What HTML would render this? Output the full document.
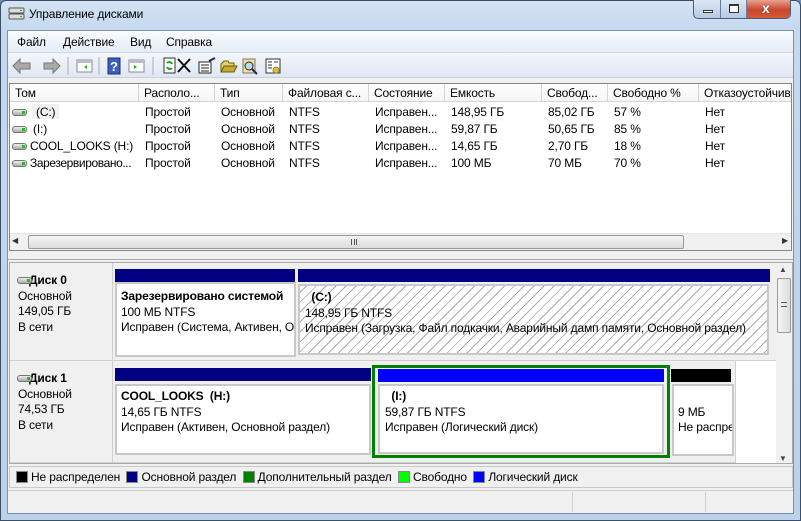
<!DOCTYPE html>
<html><head><meta charset="utf-8"><style>
*{box-sizing:border-box;margin:0;padding:0}
body{width:801px;height:521px;overflow:hidden;font-family:"Liberation Sans","DejaVu Sans",sans-serif;font-size:12px;color:#000;background:#6b8fb8;position:relative;letter-spacing:-0.15px}
.a{position:absolute}
.win{left:0;top:0;width:801px;height:521px;background:linear-gradient(#d4e3f4,#c5d8ee 30px,#bcd1ea);border:1px solid #3a4e66;border-radius:6px 6px 0 0}
.client{left:7px;top:30px;width:787px;height:484px;background:#f0f0f0;border:1px solid #7d93ab}
.hdr{top:84px;height:18px;background:#fff;border-bottom:1px solid #d5d5d5}
.hc{position:absolute;top:0;height:17px;border-right:1px solid #d5d5d5;padding:2px 0 0 5px;white-space:nowrap;overflow:hidden;background:linear-gradient(#fff,#f5f5f5)}
.row{position:absolute;left:0;height:17px;width:780px}
.row span{position:absolute;top:2px;white-space:nowrap}
.hd{display:inline-block;width:15px;height:7px;border:1px solid #777;border-radius:3px;background:linear-gradient(#eee,#aaa);position:relative;vertical-align:middle}
.hd:after{content:"";position:absolute;right:1px;top:1px;width:3px;height:3px;background:#2b2}
.lbl{background:#f0f0f0;border-right:1px solid #d0d0d0;border-bottom:1px solid #d0d0d0;padding:4px 0 0 8px;line-height:15.5px}
.bar{height:13px}
.box{background:#fff;border:2px solid #c8c8c8;padding:5px 0 0 4px;line-height:15.5px;white-space:nowrap;overflow:hidden}
.hatch{background:repeating-linear-gradient(135deg,#fff 0 4px,#aaa 4px 5px,#fff 5px 7px)}
.lg{display:inline-block;width:12px;height:12px;border:1px solid #888;vertical-align:-2px;margin-right:3px}
</style></head><body>
<div class="a win"></div>
<svg class="a" style="left:8px;top:6px" width="18" height="16"><rect x="1" y="2" width="15" height="5" rx="1" fill="#ddd" stroke="#555"/><rect x="1" y="8" width="15" height="5" rx="1" fill="#ddd" stroke="#555"/><rect x="12" y="4" width="2" height="1" fill="#2a2"/><rect x="12" y="10" width="2" height="1" fill="#2a2"/></svg>
<div class="a" style="left:29px;top:7px;font-size:12px">Управление дисками</div>
<div class="a" style="left:693px;top:0;width:98px;height:19px;border:1px solid #4a5e78;border-top:none;border-radius:0 0 5px 5px;background:linear-gradient(#dde8f5,#b5c9e2);overflow:hidden">
 <div class="a" style="left:0;top:0;width:27px;height:18px;border-right:1px solid #6a7e98"></div>
 <div class="a" style="left:9px;top:10px;width:10px;height:3px;border:1px solid #333;background:#fff"></div>
 <div class="a" style="left:27px;top:0;width:26px;height:18px;border-right:1px solid #6a7e98"></div>
 <div class="a" style="left:35px;top:4px;width:10px;height:9px;border:1px solid #333;border-top-width:2px;background:#fff"></div>
 <div class="a" style="left:53px;top:0;width:45px;height:18px;background:linear-gradient(#e8a290,#c9462c 55%,#d45a3a)"></div>
 <div class="a" style="left:68px;top:0px;color:#fff;font-weight:bold;font-size:14px;text-shadow:0 0 1px #333">x</div>
</div>
<div class="a client"></div>
<div class="a" style="left:8px;top:31px;width:785px;height:22px;background:linear-gradient(#fafcff,#e4ecf7);border-bottom:1px solid #d0d8e4"></div>
<div class="a" style="left:17px;top:35px">Файл</div>
<div class="a" style="left:63px;top:35px">Действие</div>
<div class="a" style="left:130px;top:35px">Вид</div>
<div class="a" style="left:166px;top:35px">Справка</div>
<div class="a" style="left:8px;top:53px;width:785px;height:25px;background:linear-gradient(#f3f6fb,#dfe7f2);border-bottom:1px solid #c8d0dc"></div>
<svg class="a" style="left:10px;top:56px" width="300" height="20">
 <path d="M3 10 L10 3 L10 7 L20 7 L20 13 L10 13 L10 17 Z" fill="#aaa" stroke="#777"/>
 <path d="M50 10 L43 3 L43 7 L34 7 L34 13 L43 13 L43 17 Z" fill="#aaa" stroke="#777"/>
 <line x1="58" y1="1" x2="58" y2="19" stroke="#aab"/>
 <rect x="67" y="4" width="15" height="12" fill="#fff" stroke="#888"/><rect x="67" y="4" width="15" height="3" fill="#bbc"/><path d="M77 9 L74 11 L77 13Z" fill="#2a2"/>
 <line x1="89" y1="1" x2="89" y2="19" stroke="#aab"/>
 <rect x="98" y="2" width="12" height="16" fill="#3a5fc8" stroke="#234"/><text x="100" y="15" fill="#fff" font-size="13" font-weight="bold" font-family="Liberation Sans">?</text>
 <rect x="119" y="4" width="15" height="12" fill="#fff" stroke="#888"/><rect x="119" y="4" width="15" height="3" fill="#bbc"/><path d="M124 9 L127 11 L124 13Z" fill="#2a2"/>
 <line x1="143" y1="1" x2="143" y2="19" stroke="#aab"/>
 <rect x="154" y="2" width="11" height="15" fill="#fff" stroke="#333"/><path d="M157 7 A3 3 0 0 1 162 8 M162 12 A3 3 0 0 1 157 11" stroke="#1a1" stroke-width="2" fill="none"/>
 <path d="M168 3 L180 16 M180 3 L168 16" stroke="#111" stroke-width="2"/>
 <rect x="189" y="6" width="12" height="11" fill="#fff" stroke="#222"/><path d="M191 9h8M191 12h8M191 15h8" stroke="#222"/><path d="M199 5 L205 2" stroke="#225" stroke-width="2"/>
 <path d="M211 8 L214 5 L218 5 L219 7 L224 7 L224 16 L211 16 Z" fill="#e8d070" stroke="#6a5a10"/><path d="M211 16 L214 10 L227 10 L224 16Z" fill="#c8a830" stroke="#6a5a10"/>
 <rect x="233" y="3" width="12" height="14" fill="#f4e090" stroke="#777"/><circle cx="239" cy="10" r="4" fill="#bde" stroke="#225"/><path d="M242 13 L247 18" stroke="#225" stroke-width="2"/>
 <rect x="256" y="3" width="14" height="14" fill="#fff" stroke="#333"/><path d="M258 6h4M258 9h4M264 6h4M258 12h4" stroke="#333"/><circle cx="266" cy="14" r="3" fill="#e8c020" stroke="#885"/>
</svg>
<div class="a" style="left:9px;top:83px;width:783px;height:168px;background:#fff;border:1px solid #82878f"></div>
<div class="a hdr" style="left:10px;width:781px">
 <div class="hc" style="left:0;width:129px">Том</div>
 <div class="hc" style="left:129px;width:76px">Располо...</div>
 <div class="hc" style="left:205px;width:68px">Тип</div>
 <div class="hc" style="left:273px;width:86px">Файловая с...</div>
 <div class="hc" style="left:359px;width:76px">Состояние</div>
 <div class="hc" style="left:435px;width:97px">Емкость</div>
 <div class="hc" style="left:532px;width:66px">Свобод...</div>
 <div class="hc" style="left:598px;width:91px">Свободно %</div>
 <div class="hc" style="left:689px;width:92px;border-right:none">Отказоустойчив</div>
</div>
<div class="a" style="left:10px;top:103px;width:781px;height:130px">
 <div class="row" style="top:0"><span style="left:2px"><i class="hd"></i></span><span style="left:22px;background:#f0f0f0;padding:0 4px;top:1px;height:15px;padding-top:1px">(C:)</span><span style="left:135px">Простой</span><span style="left:211px">Основной</span><span style="left:279px">NTFS</span><span style="left:365px">Исправен...</span><span style="left:441px">148,95 ГБ</span><span style="left:538px">85,02 ГБ</span><span style="left:604px">57 %</span><span style="left:695px">Нет</span></div>
 <div class="row" style="top:17px"><span style="left:2px"><i class="hd"></i></span><span style="left:23px">(I:)</span><span style="left:135px">Простой</span><span style="left:211px">Основной</span><span style="left:279px">NTFS</span><span style="left:365px">Исправен...</span><span style="left:441px">59,87 ГБ</span><span style="left:538px">50,65 ГБ</span><span style="left:604px">85 %</span><span style="left:695px">Нет</span></div>
 <div class="row" style="top:34px"><span style="left:2px"><i class="hd"></i></span><span style="left:20px">COOL_LOOKS (H:)</span><span style="left:135px">Простой</span><span style="left:211px">Основной</span><span style="left:279px">NTFS</span><span style="left:365px">Исправен...</span><span style="left:441px">14,65 ГБ</span><span style="left:538px">2,70 ГБ</span><span style="left:604px">18 %</span><span style="left:695px">Нет</span></div>
 <div class="row" style="top:51px"><span style="left:2px"><i class="hd"></i></span><span style="left:20px;letter-spacing:-0.4px">Зарезервировано...</span><span style="left:135px">Простой</span><span style="left:211px">Основной</span><span style="left:279px">NTFS</span><span style="left:365px">Исправен...</span><span style="left:441px">100 МБ</span><span style="left:538px">70 МБ</span><span style="left:604px">70 %</span><span style="left:695px">Нет</span></div>
</div>
<div class="a" style="left:10px;top:233px;width:781px;height:17px;background:#f0f0f0;border-top:1px solid #e4e4e4"></div>
<div class="a" style="left:12px;top:236px;font-size:8px;color:#333">◀</div>
<div class="a" style="left:782px;top:236px;font-size:8px;color:#333">▶</div>
<div class="a" style="left:28px;top:235px;width:656px;height:14px;border:1px solid #9a9a9a;border-radius:2px;background:linear-gradient(#f4f4f4,#dcdcdc)"></div>
<div class="a" style="left:351px;top:239px;width:6px;height:6px;border-left:1px solid #555;border-right:1px solid #555"></div><div class="a" style="left:354px;top:239px;width:1px;height:6px;background:#555"></div>
<div class="a" style="left:8px;top:251px;width:785px;height:9px;background:#f0f0f0;border-bottom:1px solid #aaa"></div>
<div class="a" style="left:9px;top:262px;width:784px;height:202px;background:#fff;border:1px solid #aaa"></div>
<div class="a lbl" style="left:10px;top:263px;width:103px;height:98px"><div style="font-weight:bold;margin-left:11px;margin-top:6px;position:relative"><i class="hd" style="position:absolute;left:-12px;top:4px"></i>Диск 0</div>Основной<br>149,05 ГБ<br>В сети</div>
<div class="a" style="left:113px;top:263px;width:663px;height:98px;background:#f0f0f0;border-bottom:1px solid #d0d0d0"></div>
<div class="a bar" style="left:115px;top:269px;width:180px;background:#000080"></div>
<div class="a box" style="left:115px;top:282px;width:181px;height:75px"><b>Зарезервировано системой</b><br>100 МБ NTFS<br>Исправен (Система, Активен, Осн</div>
<div class="a bar" style="left:298px;top:269px;width:472px;background:#000080"></div>
<div class="a box hatch" style="left:298px;top:284px;width:471px;height:71px;padding-left:5px;padding-top:4px">&nbsp;&nbsp;<b>(C:)</b><br>148,95 ГБ NTFS<br>Исправен (Загрузка, Файл подкачки, Аварийный дамп памяти, Основной раздел)</div>
<div class="a lbl" style="left:10px;top:361px;width:103px;height:102px"><div style="font-weight:bold;margin-left:11px;margin-top:6px;position:relative"><i class="hd" style="position:absolute;left:-12px;top:4px"></i>Диск 1</div>Основной<br>74,53 ГБ<br>В сети</div>
<div class="a" style="left:113px;top:361px;width:623px;height:102px;background:#f0f0f0;border-bottom:1px solid #d0d0d0;border-right:1px solid #d0d0d0"></div>
<div class="a bar" style="left:115px;top:368px;width:256px;background:#000080"></div>
<div class="a box" style="left:115px;top:384px;width:256px;height:71px;padding-top:3px"><b>COOL_LOOKS&nbsp; (H:)</b><br>14,65 ГБ NTFS<br>Исправен (Активен, Основной раздел)</div>
<div class="a" style="left:372px;top:365px;width:298px;height:93px;border:3px solid #008000;background:#f0f0f0"></div>
<div class="a bar" style="left:378px;top:369px;width:286px;background:#0000ff"></div>
<div class="a box" style="left:378px;top:384px;width:286px;height:70px;padding-top:3px;padding-left:5px">&nbsp;&nbsp;<b>(I:)</b><br>59,87 ГБ NTFS<br>Исправен (Логический диск)</div>
<div class="a bar" style="left:671px;top:369px;width:60px;background:#000"></div>
<div class="a box" style="left:672px;top:384px;width:62px;height:72px;padding-top:3px;padding-left:4px"><br>9 МБ<br>Не распределен</div>
<div class="a" style="left:776px;top:263px;width:16px;height:200px;background:#f0f0f0"></div>
<div class="a" style="left:779px;top:265px;font-size:8px;color:#444">▲</div>
<div class="a" style="left:779px;top:454px;font-size:8px;color:#444">▼</div>
<div class="a" style="left:777px;top:278px;width:14px;height:55px;border:1px solid #9a9a9a;border-radius:2px;background:linear-gradient(90deg,#f4f4f4,#dcdcdc)"></div>
<div class="a" style="left:781px;top:302px;width:6px;height:5px;border-top:1px solid #555;border-bottom:1px solid #555"></div>
<div class="a" style="left:9px;top:466px;width:784px;height:22px;border:1px solid #c8c8c8;background:#f0f0f0;padding:3px 0 0 6px;white-space:nowrap">
<i class="lg" style="background:#000"></i>Не распределен&nbsp;&nbsp;<i class="lg" style="background:#000080"></i>Основной раздел&nbsp;&nbsp;<i class="lg" style="background:#008000"></i>Дополнительный раздел&nbsp;&nbsp;<i class="lg" style="background:#00ff00"></i>Свободно&nbsp;&nbsp;<i class="lg" style="background:#0000ff"></i>Логический диск</div>
<div class="a" style="left:8px;top:490px;width:785px;height:23px;border-top:1px solid #ccc;background:#f0f0f0"></div>
<div class="a" style="left:572px;top:492px;width:1px;height:20px;background:#d0d0d0"></div>
<div class="a" style="left:705px;top:492px;width:1px;height:20px;background:#d0d0d0"></div>
</body></html>
